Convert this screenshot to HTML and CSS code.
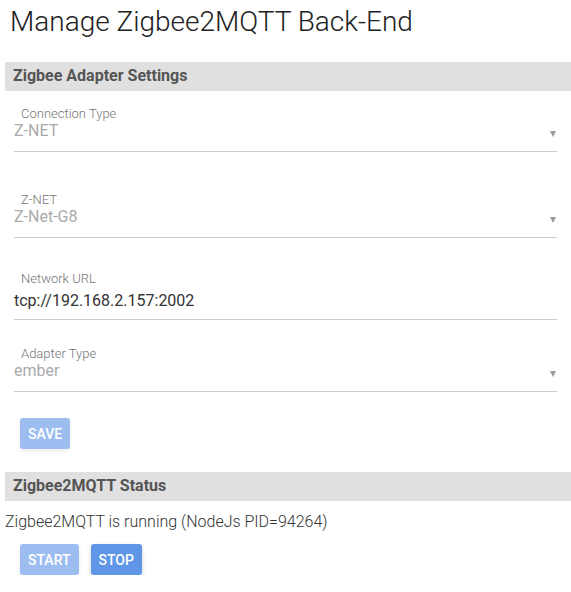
FILE: index.html
```html
<!DOCTYPE html>
<html lang="en">
<head>
    <meta charset="UTF-8">
    <meta name="viewport" content="width=device-width, initial-scale=1.0">
    <title>Manage Zigbee2MQTT Back-End</title>
    <link rel="stylesheet" href="styles.css">
</head>
<body>
    <div class="page">
        <h1>Manage Zigbee2MQTT Back-End</h1>

        <div class="section-title">Zigbee Adapter Settings</div>

        <div class="form">
            <div class="field field-first">
                <label class="field-label">Connection Type</label>
                <div class="field-value select">
                    <span>Z-NET</span>
                    <span class="caret"></span>
                </div>
            </div>

            <div class="field field-zigbee">
                <label class="field-label">Z-NET</label>
                <div class="field-value select">
                    <span>Z-Net-G8</span>
                    <span class="caret"></span>
                </div>
            </div>

            <div class="field field-url">
                <label class="field-label">Network URL</label>
                <div class="field-value input">tcp://192.168.2.157:2002</div>
            </div>

            <div class="field field-adapter">
                <label class="field-label">Adapter Type</label>
                <div class="field-value select">
                    <span>ember</span>
                    <span class="caret"></span>
                </div>
            </div>
        </div>

        <div class="actions actions-save">
            <button class="btn" disabled>Save</button>
        </div>

        <div class="section-title section-status">Zigbee2MQTT Status</div>

        <p class="status">Zigbee2MQTT is running (NodeJs PID=94264)</p>

        <div class="actions">
            <button class="btn" disabled>Start</button>
            <button class="btn">Stop</button>
        </div>
    </div>
</body>
</html>
```

FILE: styles.css
```css
:root {
    --primary-color: #6096e6;
    --primary-disabled: #9dbdf0;
    --bar-color: #e0e0e0;
    --line-color: #cccccc;
    --text-color: #333333;
}

* {
    margin: 0;
    padding: 0;
    box-sizing: border-box;
    font-family: Roboto, "Liberation Sans", sans-serif;
}

body {
    background: white;
    color: var(--text-color);
}

.page {
    padding-left: 5px;
}

h1 {
    margin-left: 5px;
    padding-top: 5px;
    font-size: 28px;
    line-height: 34px;
    font-weight: 300;
    color: #212121;
}

.section-title {
    margin-top: 23px;
    height: 29px;
    line-height: 28px;
    padding-left: 8px;
    background-color: var(--bar-color);
    color: #555555;
    font-size: 16px;
    font-weight: 700;
}

.form {
    margin: 0 14px 0 9px;
}

.field {
    border-bottom: 1px solid var(--line-color);
}

.field-first {
    margin-top: 15px;
}

.field-zigbee {
    margin-top: 40px;
}

.field-url {
    margin-top: 33px;
}

.field-adapter {
    margin-top: 26px;
}

.field-label {
    display: block;
    padding-left: 7px;
    font-size: 13px;
    line-height: 15px;
    font-weight: 300;
    color: #757575;
}

.field-value {
    font-size: 16px;
    line-height: 20px;
    padding-bottom: 10px;
}

.select {
    display: flex;
    justify-content: space-between;
    color: #aaaaaa;
}

.input {
    margin-top: 5px;
    padding-bottom: 8px;
    color: var(--text-color);
}

.caret {
    width: 0;
    height: 0;
    margin: 10px 1px 0 0;
    border-left: 3.5px solid transparent;
    border-right: 3.5px solid transparent;
    border-top: 6px solid #999999;
}

.actions {
    display: flex;
    gap: 12px;
    padding-left: 15px;
}

.actions-save {
    margin-top: 26px;
}

.btn {
    height: 31px;
    padding: 0 8px;
    border: none;
    border-radius: 3px;
    background-color: var(--primary-color);
    color: white;
    font-size: 14px;
    font-weight: 500;
    text-transform: uppercase;
    box-shadow: 0 2px 4px rgb(0 0 0 / 0.18);
    cursor: pointer;
}

.btn:disabled {
    background-color: var(--primary-disabled);
    box-shadow: 0 2px 4px rgb(0 0 0 / 0.08);
    cursor: default;
}

.section-status {
    margin-top: 23px;
}

.status {
    margin-top: 11px;
    margin-bottom: 12px;
    font-size: 16px;
    line-height: 20px;
    font-weight: 300;
}
```
